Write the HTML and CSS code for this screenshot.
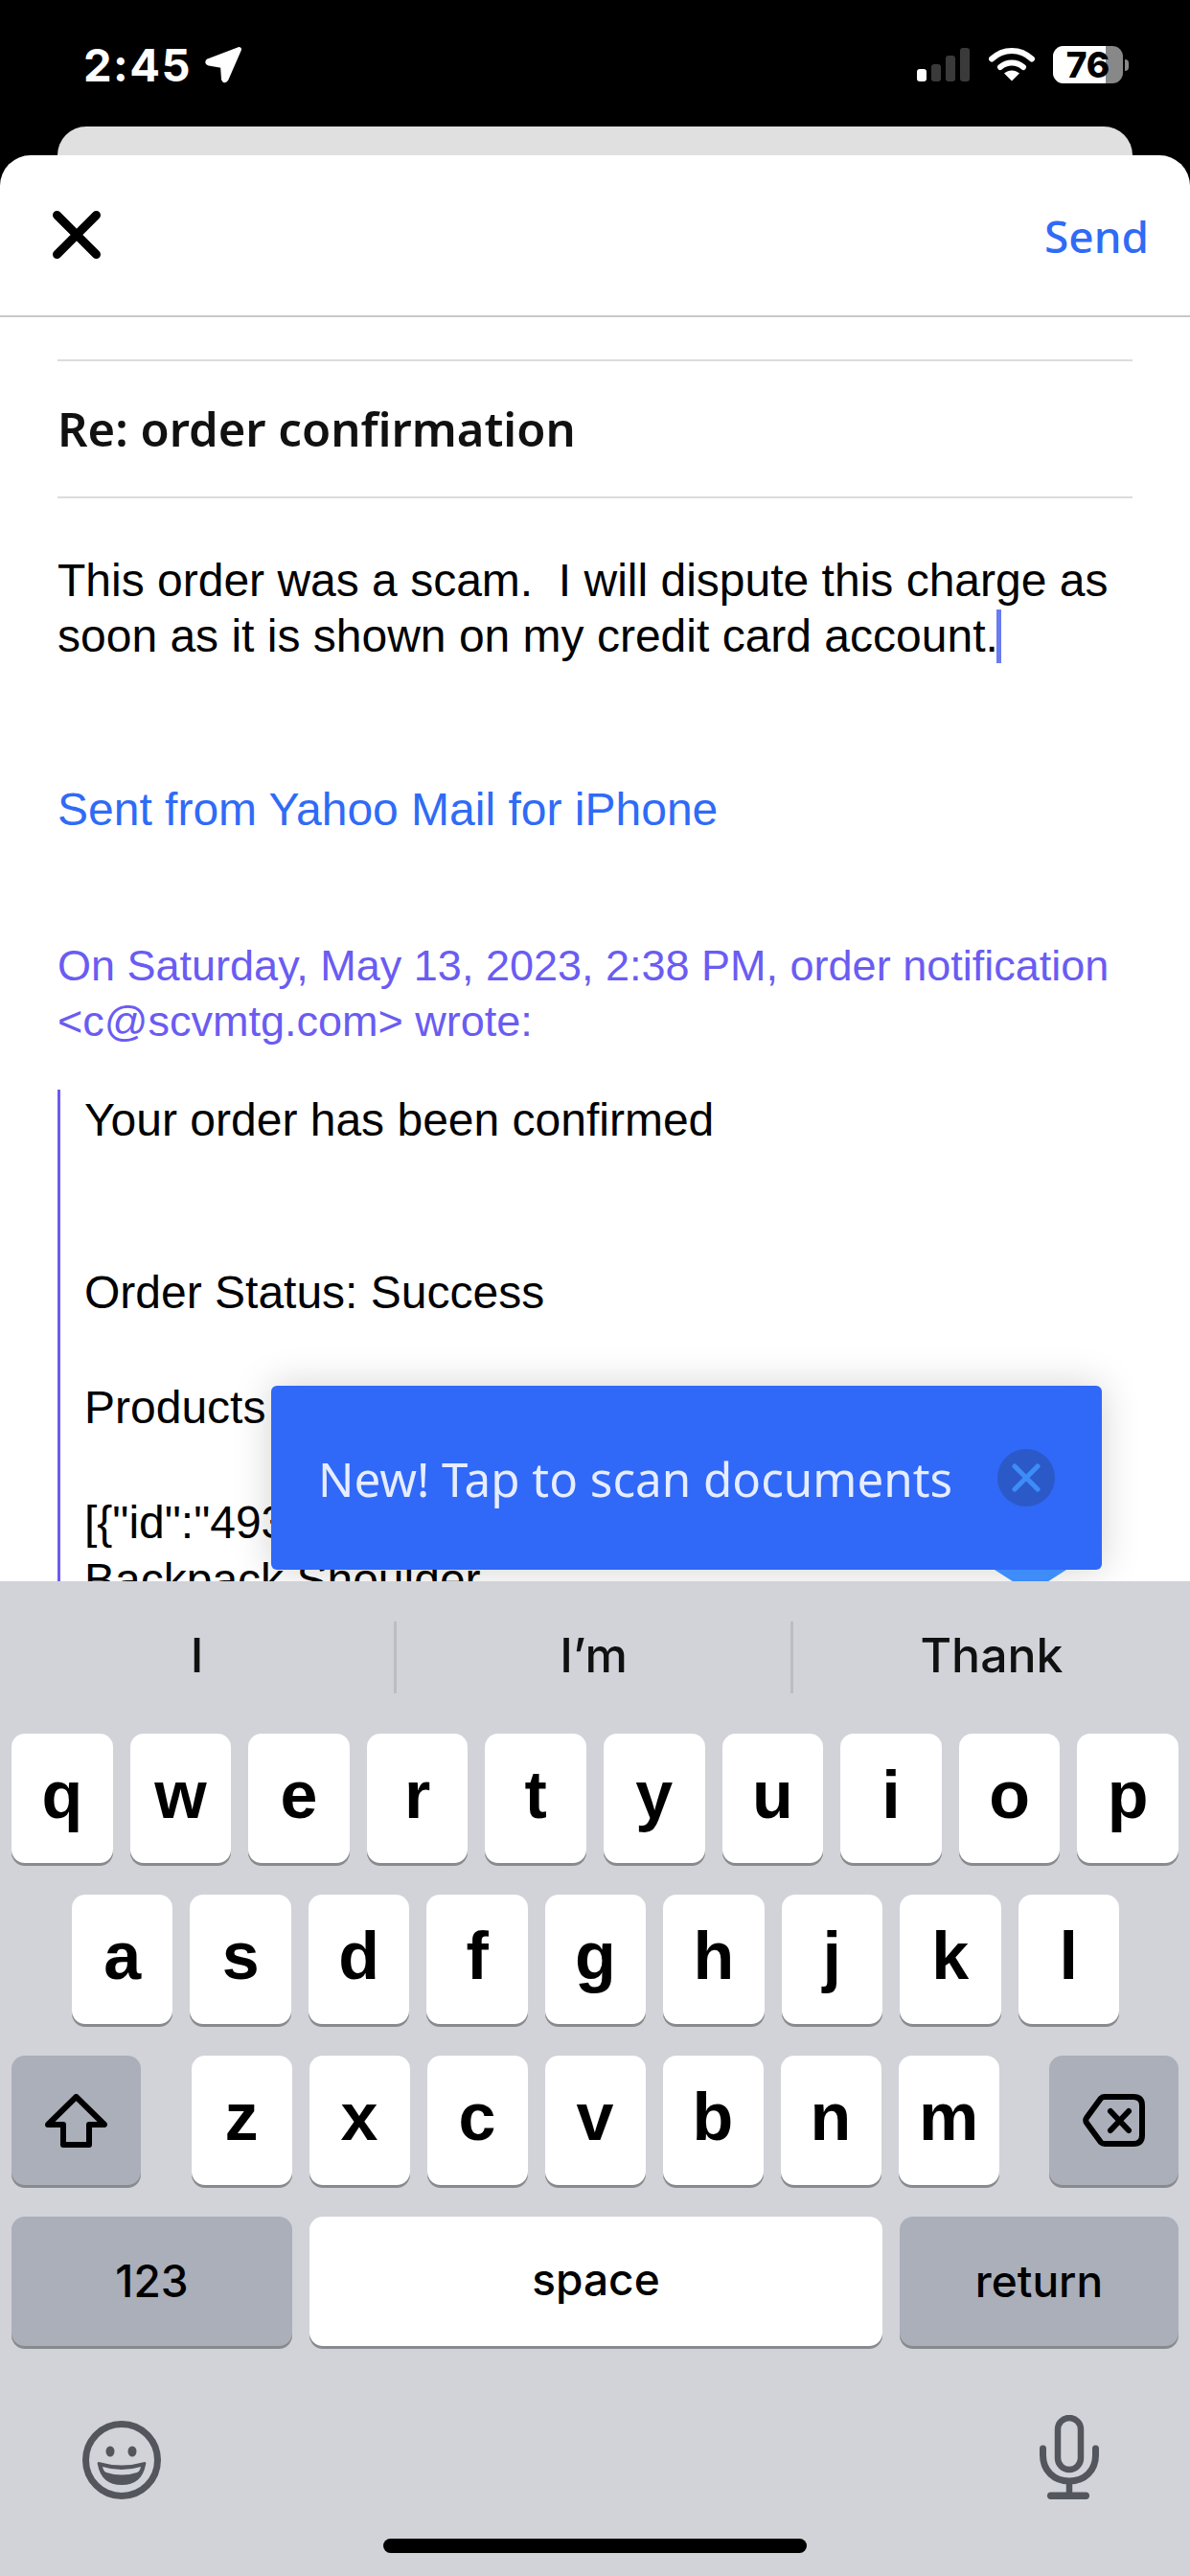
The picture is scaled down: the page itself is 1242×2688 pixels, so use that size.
FILE: index.html
```html
<!DOCTYPE html>
<html lang="en">
<head>
  <meta charset="UTF-8">
  <meta name="viewport" content="width=device-width, initial-scale=1.0">
  <title>Compose</title>
  <link rel="stylesheet" href="styles.css">
</head>
<body>
  <div class="screen">
    <div class="status">
      <div class="status-left">
        <span class="time">2:45</span>
        <svg class="loc" width="39" height="39" viewBox="0 0 39 39"><path d="M35.5 3.5 L22 34.5 Q20.5 37 19.5 34.5 L18.5 20.5 L4 18 Q1.5 17 4 15.5 Z" fill="#fff" stroke="#fff" stroke-width="5" stroke-linejoin="round"/></svg>
      </div>
      <div class="status-right">
        <div class="signal">
          <i class="bar on b1"></i><i class="bar b2"></i><i class="bar b3"></i><i class="bar b4"></i>
        </div>
        <svg class="wifi" width="48" height="36" viewBox="0 0 48 36">
          <path d="M3 12.5 C15 1 33 1 45 12.5" fill="none" stroke="#fff" stroke-width="6" stroke-linecap="round"/>
          <path d="M12 21 C19 15 29 15 36 21" fill="none" stroke="#fff" stroke-width="6" stroke-linecap="round"/>
          <path d="M24 35.5 L16 27.5 C21 23.5 27 23.5 32 27.5 Z" fill="#fff"/>
        </svg>
        <div class="battery"><span class="battery-fill"></span><span class="battery-num">76</span></div>
        <span class="battery-nub"></span>
      </div>
    </div>
    <div class="back-card"></div>

    <div class="sheet">
      <header class="sheet-head">
        <svg class="close-icon" width="50" height="50" viewBox="0 0 50 50"><path d="M4.5 4.5 L45.5 45.5 M45.5 4.5 L4.5 45.5" stroke="#000" stroke-width="9" stroke-linecap="round"/></svg>
        <span class="send">Send</span>
      </header>

      <div class="compose">
        <div class="subject">Re: order confirmation</div>
        <p class="message">This order was a scam.&nbsp; I will dispute this charge as<br>soon as it is shown on my credit card account.<span class="caret"></span></p>
        <p class="signature">Sent from Yahoo Mail for iPhone</p>
        <p class="quote-head">On Saturday, May 13, 2023, 2:38 PM, order notification<br>&lt;c@scvmtg.com&gt; wrote:</p>
        <blockquote class="quote">
          Your order has been confirmed<br><br><br>
          Order Status: Success<br><br>
          Products<br><br>
          [{"id":"4931<br>
          Backpack Shoulder
        </blockquote>
      </div>

      <div class="toast">
        <span class="toast-text">New! Tap to scan documents</span>
        <span class="toast-close">
          <svg width="30" height="30" viewBox="0 0 30 30"><path d="M3 3 L27 27 M27 3 L3 27" stroke="#3e8cf8" stroke-width="5" stroke-linecap="round"/></svg>
        </span>
        <span class="toast-arrow"></span>
      </div>
    </div>

    <div class="keyboard">
      <div class="suggestions">
        <span class="suggestion">I</span>
        <span class="suggestion">I’m</span>
        <span class="suggestion">Thank</span>
      </div>
      <div class="key-row">
        <span class="key">q</span><span class="key">w</span><span class="key">e</span><span class="key">r</span><span class="key">t</span><span class="key">y</span><span class="key">u</span><span class="key">i</span><span class="key">o</span><span class="key">p</span>
      </div>
      <div class="key-row row-two">
        <span class="key">a</span><span class="key">s</span><span class="key">d</span><span class="key">f</span><span class="key">g</span><span class="key">h</span><span class="key">j</span><span class="key">k</span><span class="key">l</span>
      </div>
      <div class="key-row row-three">
        <span class="key key-dark key-shift">
          <svg width="65" height="56" viewBox="0 0 65 56"><path d="M32.5 3 L62 32 L46 32 L46 53 L19 53 L19 32 L3 32 Z" fill="none" stroke="#000" stroke-width="6" stroke-linejoin="round"/></svg>
        </span>
        <span class="letters">
          <span class="key">z</span><span class="key">x</span><span class="key">c</span><span class="key">v</span><span class="key">b</span><span class="key">n</span><span class="key">m</span>
        </span>
        <span class="key key-dark key-shift">
          <svg width="65" height="55" viewBox="0 0 65 55"><path d="M23 3 L53 3 Q62 3 62 12 L62 43 Q62 52 53 52 L23 52 Q20.5 52 19 50.5 L4 30 Q2.5 27.5 4 25 L19 4.5 Q20.5 3 23 3 Z" fill="none" stroke="#000" stroke-width="6"/><path d="M29 18 L48 38 M48 18 L29 38" stroke="#000" stroke-width="6" stroke-linecap="round"/></svg>
        </span>
      </div>
      <div class="key-row row-four">
        <span class="key key-dark key-num">123</span>
        <span class="key key-space">space</span>
        <span class="key key-dark key-return">return</span>
      </div>
      <div class="kb-bottom">
        <svg width="82" height="82" viewBox="0 0 82 82">
          <circle cx="41" cy="41" r="37.5" fill="none" stroke="#53565c" stroke-width="7"/>
          <ellipse cx="29" cy="32" rx="4.5" ry="5.5" fill="#53565c"/>
          <ellipse cx="52" cy="32" rx="4.5" ry="5.5" fill="#53565c"/>
          <path d="M17 43 Q41 50 65 43 Q67 43 66 46 Q62 67 41 67 Q20 67 16 46 Q15 43 17 43 Z" fill="#53565c"/>
          <path d="M21 48 Q41 54 61 48 Q60 53 57 54 Q41 59 25 54 Q22 53 21 48 Z" fill="#d1d3d9"/>
        </svg>
        <svg width="62" height="88" viewBox="0 0 62 88">
          <rect x="19" y="3" width="24" height="54" rx="12" fill="none" stroke="#53565c" stroke-width="6.5"/>
          <path d="M3.5 35 L3.5 42 C3.5 58 15 69 31 69 C47 69 58.5 58 58.5 42 L58.5 35" fill="none" stroke="#53565c" stroke-width="7" stroke-linecap="round"/>
          <path d="M31 69 L31 82" stroke="#53565c" stroke-width="6.5"/>
          <rect x="8" y="80.5" width="44" height="7.5" rx="3.7" fill="#53565c"/>
        </svg>
      </div>
      <div class="home-bar"></div>
    </div>
  </div>
</body>
</html>
```

FILE: styles.css
```css
html, body {
  margin: 0;
  padding: 0;
  background: #000;
}
.screen {
  width: 1242px;
  height: 2688px;
  display: flex;
  flex-direction: column;
  overflow: hidden;
  font-family: "Liberation Sans", Arial, sans-serif;
}

/* status bar */
.status {
  height: 132px;
  flex: none;
  display: flex;
  justify-content: space-between;
  padding: 48px 64px 0 87px;
  box-sizing: border-box;
}
.status-left {
  display: flex;
  align-items: flex-start;
  gap: 14px;
}
.time {
  font-family: Inter, sans-serif;
  font-weight: 700;
  font-size: 47px;
  line-height: 40px;
  letter-spacing: 1.5px;
  color: #fff;
}
.status-right {
  display: flex;
  align-items: flex-start;
}
.signal {
  display: flex;
  align-items: flex-end;
  gap: 5px;
  height: 35px;
  margin-top: 2px;
  margin-right: 20px;
}
.bar {
  width: 10px;
  background: #3a3a3a;
  border-radius: 3px;
}
.bar.on { background: #fff; }
.b1 { height: 13px; }
.b2 { height: 18px; }
.b3 { height: 27px; }
.b4 { height: 35px; }
.wifi {
  margin-top: 1px;
  margin-right: 19px;
}
.battery {
  position: relative;
  width: 73px;
  height: 39px;
  border-radius: 11px;
  background: #888;
  display: flex;
  align-items: center;
  justify-content: center;
}
.battery-fill {
  position: absolute;
  left: 0;
  top: 0;
  bottom: 0;
  width: 55px;
  background: #fff;
  border-radius: 11px 0 0 11px;
}
.battery-num {
  position: relative;
  font-family: Inter, sans-serif;
  font-weight: 800;
  font-size: 37px;
  line-height: 39px;
  color: #000;
}
.battery-nub {
  width: 4px;
  height: 12px;
  margin: 14px 0 0 2px;
  background: #888;
  border-radius: 0 6px 6px 0;
}

.back-card {
  height: 30px;
  flex: none;
  margin: 0 60px;
  background: #e0e0e0;
  border-radius: 30px 30px 0 0;
}

/* compose sheet */
.sheet {
  position: relative;
  height: 1488px;
  flex: none;
  background: #fff;
  border-radius: 32px 32px 0 0;
  overflow: hidden;
}
.sheet-head {
  height: 169px;
  box-sizing: border-box;
  border-bottom: 2px solid #c8c8c8;
  display: flex;
  justify-content: space-between;
  align-items: flex-start;
  padding: 58px 43px 0 55px;
}
.send {
  font-family: "Noto Sans", sans-serif;
  font-weight: 500;
  font-size: 46px;
  line-height: 64px;
  margin-top: -6px;
  color: #2f6bf6;
}
.compose {
  padding: 44px 60px 0 60px;
}
.subject {
  height: 145px;
  box-sizing: border-box;
  border-top: 2px solid #dcdcdc;
  border-bottom: 2px solid #dcdcdc;
  font-family: "Noto Sans", sans-serif;
  font-weight: 600;
  font-size: 49px;
  line-height: 141px;
  color: #111;
}
.message {
  margin: 57px 0 0;
  font-size: 48px;
  line-height: 58px;
  color: #000;
}
.caret {
  display: inline-block;
  width: 5px;
  height: 56px;
  margin-left: -2px;
  vertical-align: -12px;
  background: #6a7cf0;
}
.signature {
  margin: 123px 0 0;
  font-size: 48px;
  line-height: 58px;
  color: #2f6bf6;
}
.quote-head {
  margin: 105px 0 0;
  font-size: 45px;
  line-height: 58px;
  color: #6a5cf2;
}
.quote {
  margin: 42px 0 0;
  padding: 2px 0 0 25px;
  border-left: 3px solid #6a5cf2;
  font-size: 48px;
  line-height: 60px;
  color: #000;
}

/* scan tip */
.toast {
  position: absolute;
  left: 283px;
  top: 1284px;
  width: 867px;
  height: 192px;
  box-sizing: border-box;
  padding: 0 50px;
  display: flex;
  align-items: center;
  justify-content: space-between;
  background: #3068f8;
  border-radius: 6px;
  box-shadow: 0 0 40px rgba(0, 0, 0, 0.18);
}
.toast-text {
  font-family: "Noto Sans", sans-serif;
  font-size: 49.3px;
  margin-left: -1px;
  color: #e6edff;
}
.toast-close {
  width: 60px;
  height: 60px;
  border-radius: 50%;
  background: #2b5ac8;
  display: flex;
  align-items: center;
  justify-content: center;
  flex: none;
  margin-right: -1px;
}
.toast-arrow {
  position: absolute;
  left: 755px;
  top: 192px;
  width: 75px;
  height: 24px;
  background: #3e8cf8;
  clip-path: polygon(0 0, 100% 0, 50% 100%);
}

/* keyboard */
.keyboard {
  position: relative;
  height: 1038px;
  flex: none;
  background: #d1d3d9;
}
.suggestions {
  height: 159px;
  display: flex;
  align-items: center;
}
.suggestion {
  width: 414px;
  height: 75px;
  box-sizing: border-box;
  text-align: center;
  font-family: Inter, sans-serif;
  font-weight: 500;
  font-size: 50px;
  line-height: 70px;
  color: #111;
  border-right: 3px solid #bcbdc3;
}
.suggestion:last-child {
  border-right: none;
}
.key-row {
  display: flex;
  gap: 18px;
  height: 138px;
  margin-bottom: 30px;
  padding: 0 12px;
}
.row-two {
  padding: 0 74px 0 75px;
}
.row-three {
  justify-content: space-between;
}
.letters {
  display: flex;
  gap: 18px;
  width: 843px;
}
.key {
  flex: 1;
  height: 135px;
  box-sizing: border-box;
  display: flex;
  align-items: center;
  justify-content: center;
  background: #fff;
  border-radius: 14px;
  box-shadow: 0 3px 0 #898a8d;
  font-weight: 700;
  font-size: 70px;
  color: #000;
  padding-bottom: 8px;
}
.key-dark {
  background: #abafba;
}
.key-shift {
  flex: none;
  width: 135px;
  padding-bottom: 0;
}
.key-num, .key-return, .key-space {
  font-family: Inter, sans-serif;
  font-weight: 500;
  font-size: 46px;
  padding-bottom: 2px;
}
.key-space {
  padding-bottom: 6px;
}
.key-num {
  flex: none;
  width: 293px;
}
.key-return {
  flex: none;
  width: 291px;
}
.kb-bottom {
  display: flex;
  justify-content: space-between;
  align-items: flex-end;
  margin-top: 69px;
  padding: 0 95px 0 86px;
}
.home-bar {
  position: absolute;
  left: 400px;
  bottom: 24px;
  width: 442px;
  height: 15px;
  background: #000;
  border-radius: 8px;
}
```
